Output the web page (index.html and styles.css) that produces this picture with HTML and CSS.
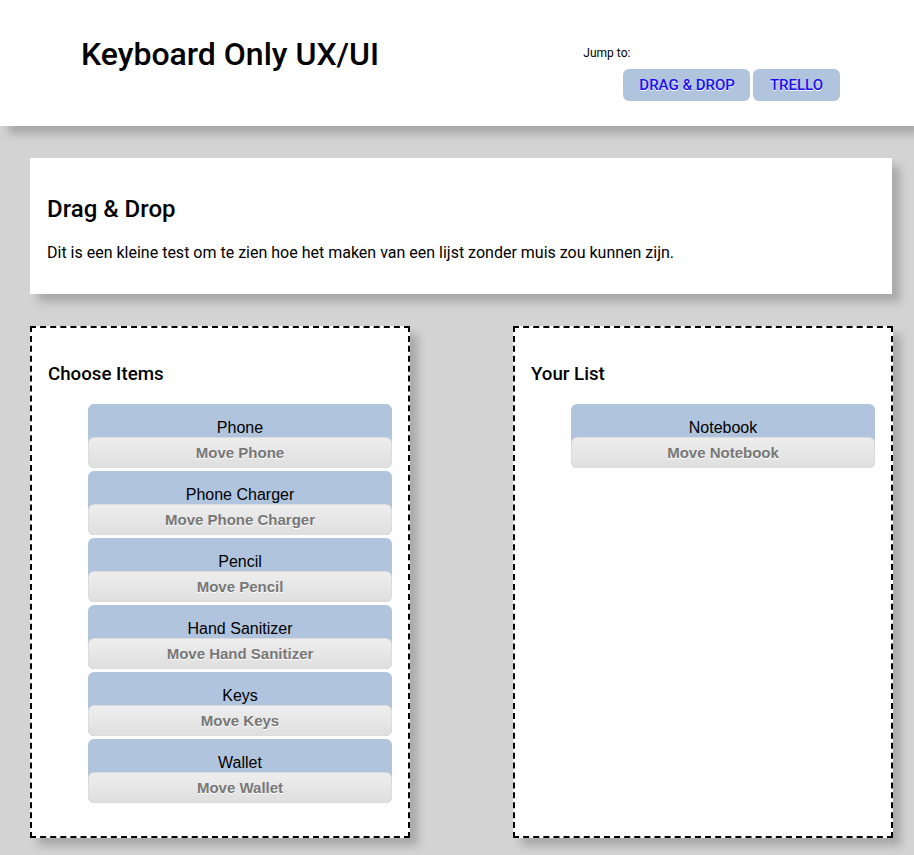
FILE: index.html
```html
<!DOCTYPE html>
<html lang="nl">
<head>
<meta charset="utf-8">
<title>Keyboard Only UX/UI</title>
<link rel="stylesheet" href="styles.css">
</head>
<body>
<header class="site-header">
  <h1 class="site-title">Keyboard Only UX/UI</h1>
  <nav class="jump">
    <p class="jump-label">Jump to:</p>
    <ul class="jump-list">
      <li><a class="jump-btn" href="#dragdrop">DRAG &amp; DROP</a></li>
      <li><a class="jump-btn" href="#trello">TRELLO</a></li>
    </ul>
  </nav>
</header>
<main class="main">
  <section class="intro" id="dragdrop">
    <h2 class="intro-title">Drag &amp; Drop</h2>
    <p class="intro-text">Dit is een kleine test om te zien hoe het maken van een lijst zonder muis zou kunnen zijn.</p>
  </section>
  <div class="columns">
    <div class="box">
      <h3 class="box-title">Choose Items</h3>
      <ul class="items">
        <li class="item"><span class="item-label">Phone</span><button class="move-btn">Move Phone</button></li>
        <li class="item"><span class="item-label">Phone Charger</span><button class="move-btn">Move Phone Charger</button></li>
        <li class="item"><span class="item-label">Pencil</span><button class="move-btn">Move Pencil</button></li>
        <li class="item"><span class="item-label">Hand Sanitizer</span><button class="move-btn">Move Hand Sanitizer</button></li>
        <li class="item"><span class="item-label">Keys</span><button class="move-btn">Move Keys</button></li>
        <li class="item"><span class="item-label">Wallet</span><button class="move-btn">Move Wallet</button></li>
      </ul>
    </div>
    <div class="box">
      <h3 class="box-title">Your List</h3>
      <ul class="items">
        <li class="item"><span class="item-label">Notebook</span><button class="move-btn">Move Notebook</button></li>
      </ul>
    </div>
  </div>
</main>
</body>
</html>
```
FILE: styles.css
```css
* { box-sizing: border-box; }

body {
  margin: 0;
  background: #d3d3d3;
  font-family: Roboto, "Liberation Sans", sans-serif;
  color: #000;
}

.site-header {
  display: flex;
  align-items: flex-start;
  height: 126px;
  padding: 0 74px 0 81px;
  background: #fff;
  box-shadow: 8px 8px 8px #aaa;
}

.site-title {
  margin: 36px 0 0;
  font-size: 32px;
  font-weight: 500;
  line-height: 37px;
}

.jump {
  margin-left: auto;
  padding-top: 46px;
}

.jump-label {
  margin: 0 0 0 3px;
  font-size: 12px;
  line-height: 14px;
}

.jump-list {
  list-style: none;
  margin: 9px 0 0;
  padding: 0 0 0 43px;
  display: flex;
  gap: 3px;
}

.jump-btn {
  display: block;
  padding: 7px 17px;
  background: #b0c4de;
  border-radius: 6px;
  color: #1a0dee;
  text-decoration: none;
  font-size: 15px;
  font-weight: 500;
  line-height: 18px;
  text-shadow: 0 1px 0 #fff;
}

.jump-list li:first-child .jump-btn {
  padding: 7px 15px 7px 16px;
}

.main {
  padding: 32px 22px 40px 30px;
}

.intro {
  background: #fff;
  padding: 17px 17px 16px;
  box-shadow: 8px 8px 8px #aaa;
}

.intro-title {
  margin: 20px 0;
  font-size: 24px;
  font-weight: 500;
  line-height: 28px;
}

.intro-text {
  margin: 20px 0 16px;
  font-size: 16px;
  line-height: 19px;
}

.columns {
  display: flex;
  justify-content: space-between;
  margin-top: 32px;
  margin-right: -1px;
}

.box {
  width: 380px;
  padding: 16px 16px 17px;
  background: #fff;
  border: 2px dashed #000;
  box-shadow: 8px 8px 8px #aaa;
}

.box-title {
  margin: 18.72px 0;
  font-size: 18.72px;
  font-weight: 500;
  line-height: 23px;
}

.items {
  list-style: none;
  margin: 16px 0;
  padding: 0 0 0 40px;
}

.item {
  background: #b0c4de;
  border-radius: 6px;
  padding-top: 14px;
  text-align: center;
}

.item + .item {
  margin-top: 3px;
}

.item-label {
  display: block;
  font-family: "Liberation Sans", Arial, sans-serif;
  font-size: 16px;
  line-height: 19px;
}

.move-btn {
  display: block;
  width: 100%;
  padding: 6px 24px;
  background: linear-gradient(to bottom, #ededed 5%, #dfdfdf 100%);
  border: 1px solid #dcdcdc;
  border-radius: 6px;
  color: #777;
  font-family: "Liberation Sans", Arial, sans-serif;
  font-size: 15px;
  font-weight: bold;
  line-height: 17px;
  text-shadow: 0 1px 0 #fff;
}
```
